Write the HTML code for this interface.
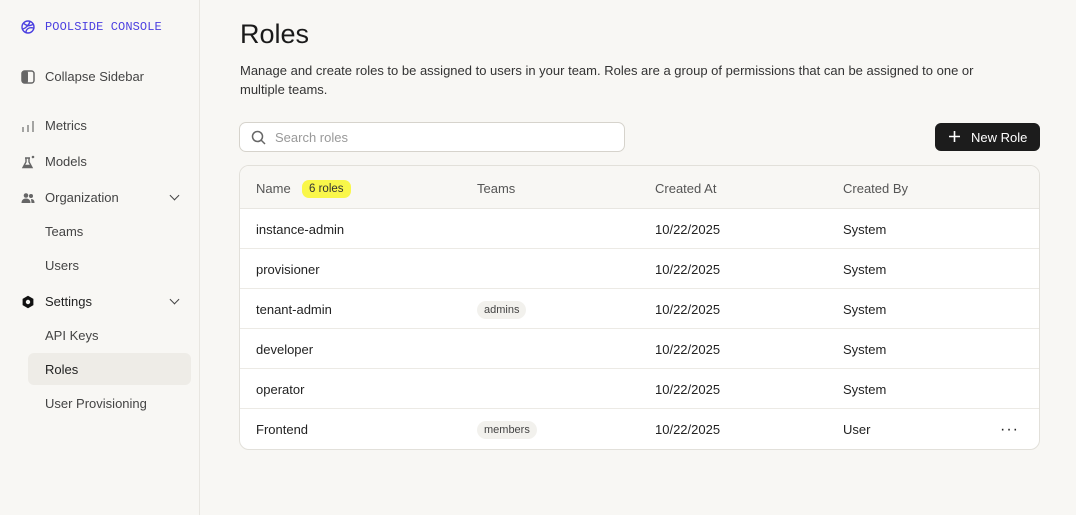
<!DOCTYPE html>
<html><head><style>
*{box-sizing:border-box;margin:0;padding:0}
body{width:1076px;height:515px;background:#f8f7f4;font-family:"Liberation Sans",sans-serif;color:#222;position:relative;overflow:hidden}
.sb{position:absolute;left:0;top:0;width:200px;height:515px;border-right:1px solid #e8e6e1}
.it{position:absolute;left:21px;font-size:13px;color:#444;display:flex;align-items:center}
.it svg{margin-right:10px}
.sub{position:absolute;left:45px;font-size:13px;color:#444}
.chev{position:absolute;left:171px;width:7px;height:7px;border-right:1.5px solid #444;border-bottom:1.5px solid #444;transform:rotate(45deg)}
h1{position:absolute;left:240px;top:19px;font-size:27px;font-weight:normal;color:#1a1a1a}
.desc{position:absolute;left:240px;top:61px;width:780px;font-size:13px;line-height:19px;color:#333}
.search{position:absolute;left:239px;top:122px;width:386px;height:30px;border:1px solid #d6d3cc;border-radius:7px;background:#fff}
.search span{position:absolute;left:35px;top:7px;font-size:13px;color:#999}
.btn{position:absolute;left:935px;top:123px;width:105px;height:28px;background:#1c1c1c;border-radius:6px;color:#fff;font-size:13px}
.tbl{position:absolute;left:239px;top:165px;width:801px;height:285px;border:1px solid #e2e0da;border-radius:10px;overflow:hidden;background:#fff}
.hd{height:43px;background:#f8f7f4;border-bottom:1px solid #e8e6e1;position:relative;font-size:13px;color:#555}
.row{height:40px;border-bottom:1px solid #eceae5;position:relative;font-size:13px;color:#222}
.row:last-child{border-bottom:none}
.c{position:absolute;top:13px}
.hd .c{top:15px}
.tag{position:absolute;left:237px;top:12px;background:#f2f1ed;border-radius:9px;padding:3px 7px;font-size:11px;color:#444}
</style></head><body>
<div class="sb">
 <div class="it" style="top:20px;color:#4a3ee0;font-family:'Liberation Mono',monospace;font-size:12px;letter-spacing:.1px">
  <svg width="14" height="14" viewBox="0 0 14 14" fill="none" stroke="#4a3ee0" stroke-width="1.4"><circle cx="7" cy="7" r="6"/><path d="M2 9C5 8 8 5 9 1.5M5 12.5C5 9 8 7 12.5 8M3 3.5c2 2 5 3 9 1"/></svg>POOLSIDE CONSOLE</div>
 <div class="it" style="top:69px"><svg width="14" height="14"><rect x="1" y="1" width="12" height="12" rx="2.5" fill="none" stroke="#666" stroke-width="1.5"/><rect x="1" y="1" width="6" height="12" rx="2" fill="#666"/></svg>Collapse Sidebar</div>
 <div class="it" style="top:118px"><svg width="14" height="14" stroke="#777" stroke-width="1.3"><path d="M2 8v5M7 6v7M12 2v11"/></svg>Metrics</div>
 <div class="it" style="top:154px"><svg width="14" height="14" fill="none" stroke="#666" stroke-width="1.4"><path d="M5 3v4L2 12.5h9L8 7V3M4 3h5"/><path d="M3 11h7" stroke-width="2.5"/><circle cx="12" cy="2" r=".6"/></svg>Models</div>
 <div class="it" style="top:190px"><svg width="14" height="14" fill="#666"><circle cx="5" cy="4.5" r="2.3"/><circle cx="10" cy="5" r="2"/><path d="M0.5 12c0-3 2-4.5 4.5-4.5s4.5 1.5 4.5 4.5z"/><path d="M10 8c2.5 0 3.5 1.5 3.5 4h-3z"/></svg>Organization</div>
 <div class="chev" style="top:192px"></div>
 <div class="sub" style="top:224px">Teams</div>
 <div class="sub" style="top:258px">Users</div>
 <div class="it" style="top:294px;color:#222"><svg width="14" height="14"><path d="M7 .8l5.4 3.1v6.2L7 13.2 1.6 10.1V3.9z" fill="#111"/><circle cx="7" cy="7" r="2.2" fill="#f8f7f4"/></svg>Settings</div>
 <div class="chev" style="top:296px"></div>
 <div class="sub" style="top:328px">API Keys</div>
 <div style="position:absolute;left:28px;top:353px;width:163px;height:32px;background:#eeece7;border-radius:6px"></div>
 <div class="sub" style="top:362px;color:#222">Roles</div>
 <div class="sub" style="top:396px">User Provisioning</div>
</div>
<h1>Roles</h1>
<div class="desc">Manage and create roles to be assigned to users in your team. Roles are a group of permissions that can be assigned to one or multiple teams.</div>
<div class="search"><svg style="position:absolute;left:11px;top:7px" width="15" height="15" fill="none" stroke="#666" stroke-width="1.5"><circle cx="6.5" cy="6.5" r="5"/><path d="M10 10l4 4"/></svg><span>Search roles</span></div>
<div class="btn"><svg style="position:absolute;left:13px;top:7px" width="13" height="13" stroke="#fff" stroke-width="1.6"><path d="M6.5 1v11M1 6.5h11"/></svg><span style="position:absolute;left:36px;top:7px">New Role</span></div>
<div class="tbl">
 <div class="hd"><span class="c" style="left:16px">Name</span><span style="position:absolute;left:62px;top:14px;background:#f9f74a;border-radius:7px;padding:3px 7px;font-size:11.5px;color:#333">6 roles</span><span class="c" style="left:237px">Teams</span><span class="c" style="left:415px">Created At</span><span class="c" style="left:603px">Created By</span></div>
 <div class="row"><span class="c" style="left:16px">instance-admin</span><span class="c" style="left:415px">10/22/2025</span><span class="c" style="left:603px">System</span></div>
 <div class="row"><span class="c" style="left:16px">provisioner</span><span class="c" style="left:415px">10/22/2025</span><span class="c" style="left:603px">System</span></div>
 <div class="row"><span class="c" style="left:16px">tenant-admin</span><span class="tag">admins</span><span class="c" style="left:415px">10/22/2025</span><span class="c" style="left:603px">System</span></div>
 <div class="row"><span class="c" style="left:16px">developer</span><span class="c" style="left:415px">10/22/2025</span><span class="c" style="left:603px">System</span></div>
 <div class="row"><span class="c" style="left:16px">operator</span><span class="c" style="left:415px">10/22/2025</span><span class="c" style="left:603px">System</span></div>
 <div class="row"><span class="c" style="left:16px">Frontend</span><span class="tag">members</span><span class="c" style="left:415px">10/22/2025</span><span class="c" style="left:603px">User</span><span class="c" style="left:760px;top:12px;font-size:16px;letter-spacing:1px">···</span></div>
</div>
</body></html>
